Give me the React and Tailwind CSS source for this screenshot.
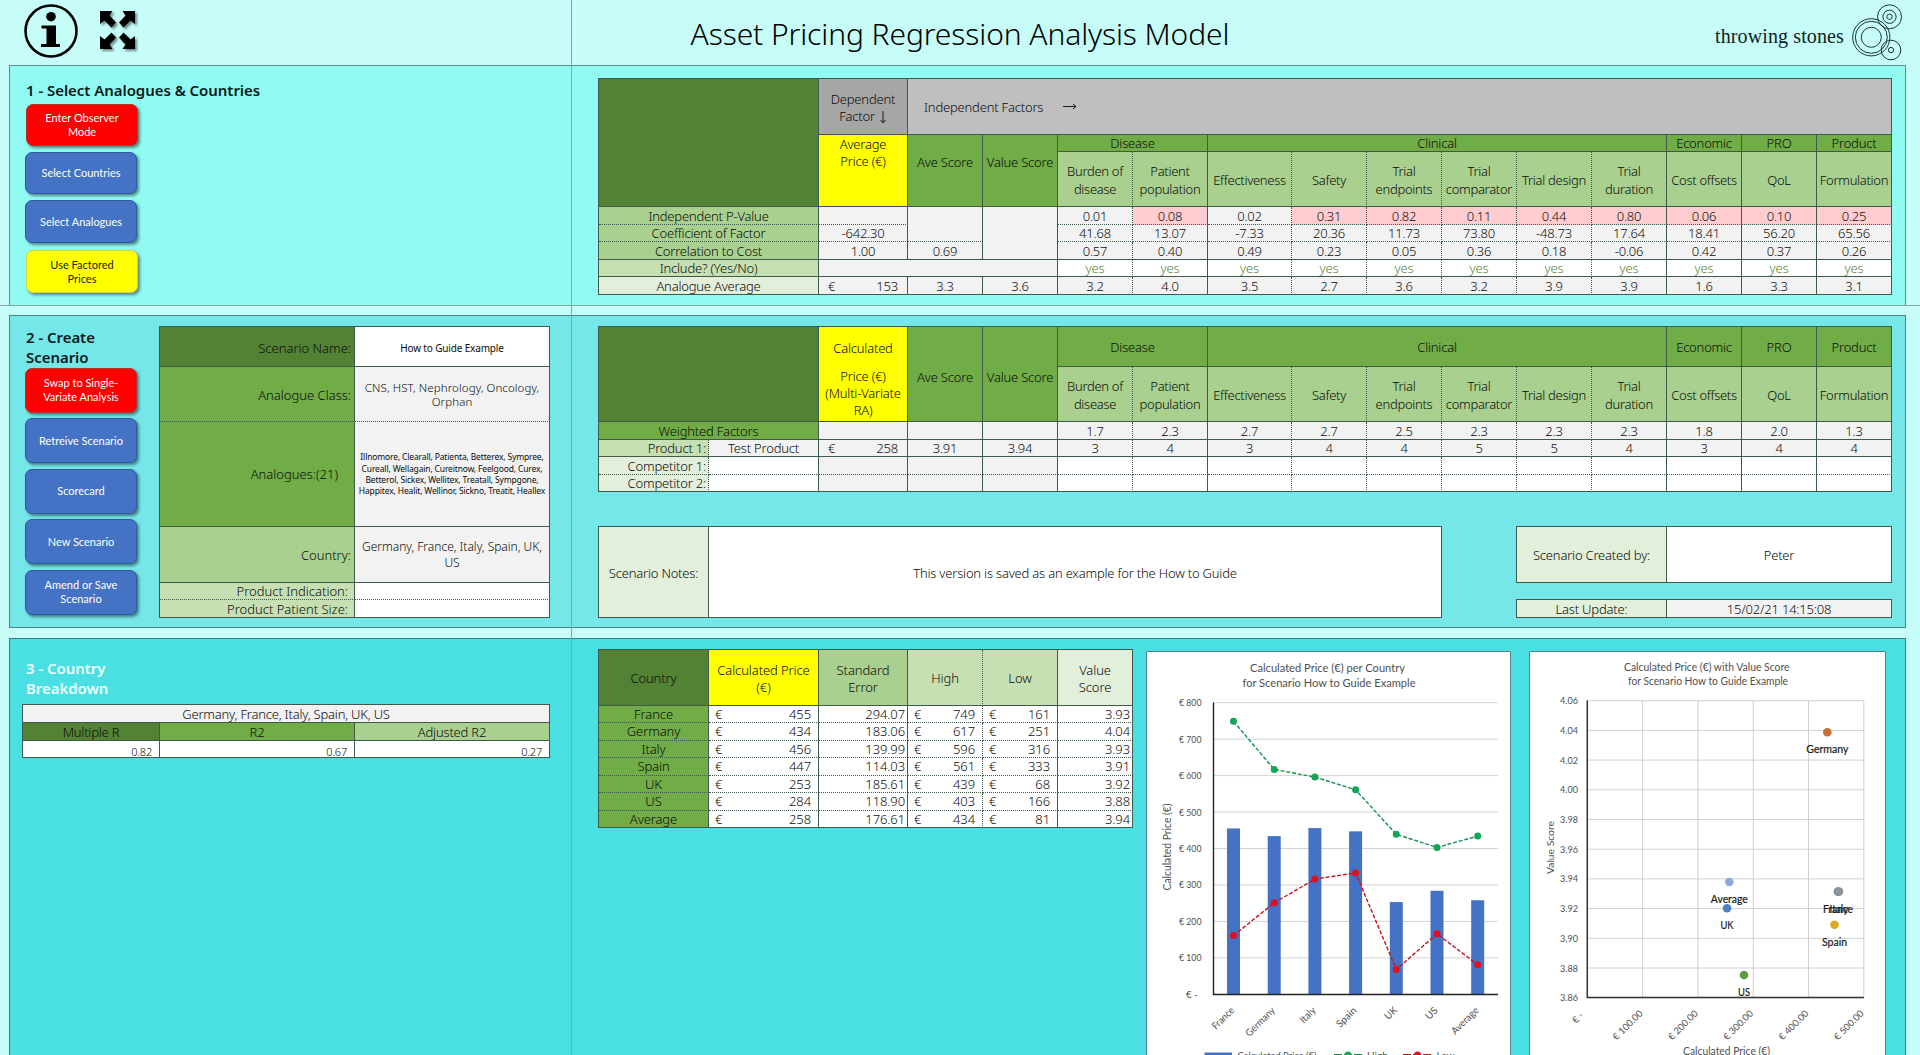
import React from "react";

const S = "border-r border-b border-[#3f5a4a] flex items-center justify-center text-center ";
const SD = "border-r border-b border-[#3f5a4a] [border-bottom-style:dotted] flex items-center justify-center text-center ";
const DS = "border-r border-b border-[#3f5a4a] [border-right-style:dotted] flex items-center justify-center text-center ";
const DD = "border-r border-b border-[#3f5a4a] border-dotted flex items-center justify-center text-center ";

const DARK = "bg-[#548235] ";
const GREEN = "bg-[#70ad47] ";
const LIGHT = "bg-[#a9d08e] ";
const PALE = "bg-[#c6e0b4] ";
const FAINT = "bg-[#e2efda] ";
const GREY = "bg-[#f2f2f2] ";

function factorBorder(i, dottedBottom) {
  const dottedRight = i === 0 || (i >= 2 && i <= 6);
  if (dottedRight) return dottedBottom ? DD : DS;
  return dottedBottom ? SD : S;
}

const FACTORS = ["Burden of disease", "Patient population", "Effectiveness", "Safety", "Trial endpoints", "Trial comparator", "Trial design", "Trial duration", "Cost offsets", "QoL", "Formulation"];
const P_VALUES = ["0.01", "0.08", "0.02", "0.31", "0.82", "0.11", "0.44", "0.80", "0.06", "0.10", "0.25"];
const COEFFS = ["41.68", "13.07", "-7.33", "20.36", "11.73", "73.80", "-48.73", "17.64", "18.41", "56.20", "65.56"];
const CORRS = ["0.57", "0.40", "0.49", "0.23", "0.05", "0.36", "0.18", "-0.06", "0.42", "0.37", "0.26"];
const AVERAGES = ["3.2", "4.0", "3.5", "2.7", "3.6", "3.2", "3.9", "3.9", "1.6", "3.3", "3.1"];
const WEIGHTS = ["1.7", "2.3", "2.7", "2.7", "2.5", "2.3", "2.3", "2.3", "1.8", "2.0", "1.3"];
const PRODUCT = ["3", "4", "3", "4", "4", "5", "5", "4", "3", "4", "4"];
const BLANKS = ["", "", "", "", "", "", "", "", "", "", ""];

function Values({ items, dotted, tone }) {
  return items.map((v, i) => (
    <div key={i} className={factorBorder(i, dotted) + (tone || GREY)}>{v}</div>
  ));
}

function FactorNames() {
  return FACTORS.map((f, i) => (
    <div key={f} className={factorBorder(i, false) + LIGHT + "leading-[17.3px] tracking-[-0.3px] px-px pt-[3px]"}>{f}</div>
  ));
}

function GroupNames() {
  return (
    <>
      <div className={S + GREEN + "col-span-2"}>Disease</div>
      <div className={S + GREEN + "col-span-6"}>Clinical</div>
      <div className={S + GREEN}>Economic</div>
      <div className={S + GREEN}>PRO</div>
      <div className={S + GREEN}>Product</div>
    </>
  );
}

function Money({ children, className }) {
  return (
    <span className={"flex w-full justify-between " + (className || "pl-[9px] pr-[9px]")}>
      <span>€</span>
      <span>{children}</span>
    </span>
  );
}

function Button({ color = "blue", className = "", children }) {
  const tone =
    color === "red" ? "bg-[#ff0000] border-[#b3322c] text-white " :
    color === "yellow" ? "bg-[#ffff00] border-[#d9d23a] text-[#222] " :
    "bg-[#4472c4] border-[#2f5a9e] text-white ";
  return (
    <button className={"flex w-28 items-center justify-center rounded-[7px] border text-center font-[Lato] text-[11px] font-normal leading-[14px] tracking-normal shadow-[2px_2px_3px_rgba(0,0,0,0.45)] " + tone + className}>
      {children}
    </button>
  );
}

function Header() {
  return (
    <header className="flex h-[65px] w-full shrink-0 justify-between">
      <div className="flex w-[571px] gap-[21px] pl-6 pt-1">
        <svg width="54" height="54" viewBox="0 0 54 54">
          <circle cx="27" cy="27" r="25.5" fill="none" stroke="#000" strokeWidth="2.6" />
          <circle cx="27" cy="12.7" r="4.8" />
          <path d="M17.5 21.5H32V40H36V43H17V40H22.5V24.500H17.500Z" />
        </svg>
        <svg width="40" height="42" viewBox="0 0 40 42" className="mt-[6px] drop-shadow-[2px_2px_1px_rgba(0,0,0,0.45)]">
          {[0, 1, 2, 3].map((k) => (
            <path
              key={k}
              transform={`translate(${k % 2 ? 36 : 1} ${k > 1 ? 39 : 1}) scale(${k % 2 ? -1 : 1} ${k > 1 ? -1 : 1})`}
              d="M0 0H12.500L9.500 4.500L16 11.500L11.500 16.500L4.500 9.500L0 13Z"
            />
          ))}
        </svg>
      </div>
      <h1 className="w-[770px] whitespace-nowrap pt-[14px] text-center text-[30px] font-light leading-[40px] tracking-[-0.1px] text-black">
        Asset Pricing Regression Analysis Model
      </h1>
      <div className="flex w-[571px] justify-end">
        <span className="mr-[8px] pt-[23px] font-['Liberation_Serif'] text-[20px] leading-[26px] tracking-[0.12px] text-[#122]">throwing stones</span>
        <svg width="68" height="65" viewBox="1852 0 68 65" fill="none" stroke="#1c3434" strokeWidth="1">
          <circle cx="1871.300" cy="37.300" r="18.600" />
          <circle cx="1871.300" cy="37.300" r="16" />
          <circle cx="1871.300" cy="37.300" r="10" />
          <circle cx="1889.500" cy="16.800" r="12" />
          <circle cx="1889.500" cy="16.800" r="6.600" />
          <circle cx="1889.500" cy="16.800" r="2.700" />
          <circle cx="1891" cy="50" r="9.800" />
          <circle cx="1891" cy="50" r="2.600" />
        </svg>
      </div>
    </header>
  );
}

const WIDE = "grid w-[1294px] border-l border-t border-[#3f5a4a] ";

function SelectSection() {
  return (
    <section className="ml-[9px] flex h-60 w-[1897px] shrink-0 items-start border-x border-t border-[#5b8f8f] bg-[#91fbf3]">
      <aside className="flex w-[588px] shrink-0 flex-col pl-[15px] pt-[14px]">
        <h2 className="ml-px text-[15px] font-semibold leading-5 tracking-[-0.05px] text-[#0b1c1c]">1 - Select Analogues &amp; Countries</h2>
        <Button color="red" className="ml-px mt-1 h-[42px]">Enter Observer<br />Mode</Button>
        <Button className="mt-[6px] h-[42px]">Select Countries</Button>
        <Button className="mt-[6px] h-[43px]">Select Analogues</Button>
        <Button color="yellow" className="ml-px mt-[7px] h-[43px]">Use Factored<br />Prices</Button>
      </aside>
      <div className={WIDE + "mt-3 grid-cols-[220px_89px_75px_75px_75px_75px_84px_75px_75px_75px_75px_75px_75px_75px_75px] grid-rows-[56px_17px_55px_18px_17px_18px_17px_18px]"}>
        <div className={S + DARK + "row-span-3"} />
        <div className={S + "bg-[#a6a6a6] leading-[17px] pt-[2px]"}>
          <span>Dependent<br />Factor
            <svg width="8" height="13" viewBox="0 0 8 13" className="ml-1 inline-block" fill="none" stroke="#1c1c1c"><path d="M4 0V12M1.500 9L4 12L6.500 9" /></svg>
          </span>
        </div>
        <div className="col-span-13 flex items-center gap-5 border-b border-r border-[#3f5a4a] bg-[#bfbfbf] pl-[16px]">
          <span>Independent Factors</span>
          <svg width="14" height="8" viewBox="0 0 14 8" fill="none" stroke="#1c1c1c"><path d="M0 3.500H13M10 1L13 3.500L10 6" /></svg>
        </div>
        <div className={S + "row-span-2 bg-[#ffff00] items-start! pt-px leading-[17px]"}>Average<br />Price (€)</div>
        <div className={S + GREEN + "row-span-2 pb-[17px]"}>Ave Score</div>
        <div className={S + GREEN + "row-span-2 pb-[17px] whitespace-nowrap"}>Value Score</div>
        <GroupNames />
        <FactorNames />

        <div className={SD + LIGHT}>Independent P-Value</div>
        <div className={SD + GREY} />
        <div className={SD + GREY + "row-span-2"} />
        <div className={S + GREY + "row-span-3"} />
        {P_VALUES.map((v, i) => (
          <div key={i} className={factorBorder(i, true) + (i === 0 || i === 2 ? GREY : "bg-[#ffcdd0]")}>{v}</div>
        ))}

        <div className={SD + LIGHT}>Coefficient of Factor</div>
        <div className={SD + GREY}>-642.30</div>
        <Values items={COEFFS} dotted />

        <div className={S + LIGHT}>Correlation to Cost</div>
        <div className={S + GREY}>1.00</div>
        <div className={S + GREY}>0.69</div>
        <Values items={CORRS} />

        <div className={S + PALE}>Include? (Yes/No)</div>
        <div className={S + GREY + "col-span-3"} />
        <Values items={BLANKS.map(() => "yes")} tone="bg-white text-[#548235]" />

        <div className={S + FAINT}>Analogue Average</div>
        <div className={S + GREY}><Money>153</Money></div>
        <div className={S + GREY}>3.3</div>
        <div className={S + GREY}>3.6</div>
        <Values items={AVERAGES} />
      </div>
    </section>
  );
}

function ScenarioTable() {
  return (
    <div className="mt-[10px] grid w-[391px] grid-cols-[195px_195px] grid-rows-[40px_55px_105px_56px_17px_18px] border-l border-t border-[#3f5a4a] tracking-normal">
      <div className={S + DARK + "justify-end! pr-[3px] pt-[3px]"}>Scenario Name:</div>
      <div className={S + "bg-white pt-[3px] text-[10px] font-normal tracking-[-0.15px]"}>How to Guide Example</div>
      <div className={SD + GREEN + "justify-end! pr-[3px] pt-[2px]"}>Analogue Class:</div>
      <div className={SD + GREY + "pt-[2px] text-[11.5px] leading-[14px] tracking-[0.1px]"}>CNS, HST, Nephrology, Oncology,<br />Orphan</div>
      <div className={S + GREEN + "justify-end! pr-4"}>Analogues:(21)</div>
      <div className={S + GREY + "whitespace-nowrap text-[8.500px] font-normal leading-[11.300px] tracking-[-0.15px]"}>
        Illnomore, Clearall, Patienta, Betterex, Sympree,<br />
        Cureall, Wellagain, Cureitnow, Feelgood, Curex,<br />
        Betterol, Sickex, Wellitex, Treatall, Sympgone,<br />
        Happitex, Healit, Wellinor, Sickno, Treatit, Heallex
      </div>
      <div className={S + LIGHT + "justify-end! pr-[3px]"}>Country:</div>
      <div className={S + GREY + "text-[12px] leading-[15.5px]"}>Germany, France, Italy, Spain, UK,<br />US</div>
      <div className={SD + PALE + "justify-end! pr-[6px]"}>Product Indication:</div>
      <div className={SD + "bg-white"} />
      <div className={S + PALE + "justify-end! pr-[6px]"}>Product Patient Size:</div>
      <div className={S + "bg-white"} />
    </div>
  );
}

function CreateSection() {
  return (
    <section className="ml-[9px] mt-[9px] flex h-[313px] w-[1897px] shrink-0 items-start border border-[#4a8488] bg-[#76e7e9]">
      <aside className="flex w-[588px] shrink-0">
        <div className="flex w-[149px] flex-col gap-[5.5px] pl-[15px] pt-[12px]">
          <h2 className="ml-px h-[34px] text-[15px] font-semibold leading-[19.500px] tracking-[-0.05px] text-[#0b1c1c]">2 - Create<br />Scenario</h2>
          <Button color="red" className="h-[45px]">Swap to Single-<br />Variate Analysis</Button>
          <Button className="h-[45px]">Retreive Scenario</Button>
          <Button className="h-[45px]">Scorecard</Button>
          <Button className="h-[45px]">New Scenario</Button>
          <Button className="h-[45px]">Amend or Save<br />Scenario</Button>
        </div>
        <ScenarioTable />
      </aside>
      <div className="flex flex-col">
        <div className={WIDE + "mt-[10px] grid-cols-[110px_110px_89px_75px_75px_75px_75px_84px_75px_75px_75px_75px_75px_75px_75px_75px] grid-rows-[40px_55px_18px_17px_18px_17px]"}>
          <div className={S + DARK + "col-span-2 row-span-2"} />
          <div className={S + "row-span-2 bg-[#ffff00] flex-col leading-[17px] justify-start! pt-[13px]"}>
            <span>Calculated</span>
            <span className="mt-[11px] whitespace-nowrap">Price (€)<br />(Multi-Variate<br />RA)</span>
          </div>
          <div className={S + GREEN + "row-span-2 pt-[5px]"}>Ave Score</div>
          <div className={S + GREEN + "row-span-2 whitespace-nowrap pt-[5px]"}>Value Score</div>
          <GroupNames />
          <FactorNames />

          <div className={S + GREEN + "col-span-2"}>Weighted Factors</div>
          <div className={S + GREY} />
          <div className={S + GREY} />
          <div className={S + GREY} />
          <Values items={WEIGHTS} />

          <div className={DS + PALE + "justify-end! pr-[2px]"}>Product 1:</div>
          <div className={S + GREY}>Test Product</div>
          <div className={S + GREY}><Money>258</Money></div>
          <div className={S + GREY}>3.91</div>
          <div className={S + GREY}>3.94</div>
          <Values items={PRODUCT} />

          <div className={DD + FAINT + "justify-end! pr-[2px]"}>Competitor 1:</div>
          <div className={SD + "bg-white"} />
          <div className={SD + GREY} />
          <div className={SD + GREY} />
          <div className={SD + GREY} />
          <Values items={BLANKS} dotted tone="bg-white" />

          <div className={DS + FAINT + "justify-end! pr-[2px]"}>Competitor 2:</div>
          <div className={S + "bg-white"} />
          <div className={S + GREY} />
          <div className={S + GREY} />
          <div className={S + GREY} />
          <Values items={BLANKS} tone="bg-white" />
        </div>

        <div className="mt-[34px] flex w-[1294px] items-start justify-between">
          <div className="grid grid-cols-[110px_733px] grid-rows-[91px] border-l border-t border-[#3f5a4a]">
            <div className={S + FAINT + "pt-[2px]"}>Scenario Notes:</div>
            <div className={S + "bg-white pt-[2px]"}>This version is saved as an example for the How to Guide</div>
          </div>
          <div className="flex flex-col gap-4">
            <div className="grid grid-cols-[150px_225px] grid-rows-[56px] border-l border-t border-[#3f5a4a]">
              <div className={S + FAINT}>Scenario Created by:</div>
              <div className={S + "bg-white"}>Peter</div>
            </div>
            <div className="grid grid-cols-[150px_225px] grid-rows-[18px] border-l border-t border-[#3f5a4a]">
              <div className={S + FAINT}>Last Update:</div>
              <div className={S + GREY}>15/02/21 14:15:08</div>
            </div>
          </div>
        </div>
      </div>
    </section>
  );
}

const COUNTRIES = [
  ["France", 455, "294.07", 749, 161, "3.93"],
  ["Germany", 434, "183.06", 617, 251, "4.04"],
  ["Italy", 456, "139.99", 596, 316, "3.93"],
  ["Spain", 447, "114.03", 561, 333, "3.91"],
  ["UK", 253, "185.61", 439, 68, "3.92"],
  ["US", 284, "118.90", 403, 166, "3.88"],
  ["Average", 258, "176.61", 434, 81, "3.94"],
];

function CountryTable() {
  return (
    <div className="mt-[10px] grid shrink-0 grid-cols-[110px_110px_89px_75px_75px_75px] grid-rows-[56px_17px_18px_17px_18px_17px_18px_17px] self-start border-l border-t border-[#3f5a4a] leading-[17px] tracking-[-0.1px]">
      <div className={S + DARK + "pt-[2px]"}>Country</div>
      <div className={S + "bg-[#ffff00] pt-[2px]"}>Calculated Price<br />(€)</div>
      <div className={S + LIGHT + "pt-[2px]"}>Standard<br />Error</div>
      <div className={DS + PALE + "pt-[2px]"}>High</div>
      <div className={S + PALE + "pt-[2px]"}>Low</div>
      <div className={S + FAINT + "pt-[2px]"}>Value<br />Score</div>
      {COUNTRIES.map(([name, price, err, high, low, score], i) => {
        const b = i === 6 ? S : SD;
        return (
          <React.Fragment key={name}>
            <div className={b + GREEN}>{name}</div>
            <div className={b + "bg-white"}><Money className="pl-[6px] pr-[7px]">{price}</Money></div>
            <div className={b + "justify-end! bg-white pr-[2px]"}>{err}</div>
            <div className={(i === 6 ? DS : DD) + "bg-white"}><Money className="pl-[6px] pr-[7px]">{high}</Money></div>
            <div className={b + "bg-white"}><Money className="pl-[6px] pr-[7px]">{low}</Money></div>
            <div className={b + "justify-end! bg-white pr-[2px]"}>{score}</div>
          </React.Fragment>
        );
      })}
    </div>
  );
}

function PriceChart() {
  const x = (i) => 1233.5 + i * 40.7;
  const y = (v) => 994.3 - v * 0.3645;
  const line = (k) => COUNTRIES.map((c, i) => `${x(i)},${y(c[k])}`).join(" ");
  const nameLen = [27, 37, 18, 24, 13, 13, 34];
  return (
    <svg width="365" height="404" viewBox="1146 651 365 404" className="ml-[13px] mt-3 shrink-0 bg-white font-[Lato] font-normal tracking-normal" fill="#505050">
      <text x="1250" y="671.500" fontSize="11" textLength="155" lengthAdjust="spacingAndGlyphs">Calculated Price (€) per Country</text>
      <text x="1242.500" y="686.500" fontSize="11" textLength="173" lengthAdjust="spacingAndGlyphs">for Scenario How to Guide Example</text>
      {[1, 2, 3, 4, 5, 6, 7, 8].map((n) => (
        <g key={n}>
          <path d={`M1213 ${y(n * 100)}H1498`} stroke="#d4d4d4" />
          <text x="1179" y={y(n * 100) + 3.5} fontSize="9.500" textLength="22.500" lengthAdjust="spacingAndGlyphs">{`€ ${n}00`}</text>
        </g>
      ))}
      <text x="1186" y="997.500" fontSize="9.500">€ -</text>
      {COUNTRIES.map((c, i) => (
        <rect key={c[0]} x={x(i) - 6.5} y={y(c[1])} width="13" height={994.3 - y(c[1])} fill="#4472c4" />
      ))}
      <path d="M1213.500 702.500V994.500H1498" fill="none" stroke="#222" strokeWidth="1.400" />
      <polyline points={line(3)} fill="none" stroke="#12944c" strokeWidth="1.400" strokeDasharray="4 1.800" />
      <polyline points={line(4)} fill="none" stroke="#c8141c" strokeWidth="1.400" strokeDasharray="4 1.800" />
      {COUNTRIES.map((c, i) => (
        <g key={c[0]}>
          <circle cx={x(i)} cy={y(c[3])} r="3.500" fill="#14a656" />
          <circle cx={x(i)} cy={y(c[4])} r="3.500" fill="#e01020" />
          <text transform={`translate(${x(i) + 1.5} 1011) rotate(-45)`} x={-nameLen[i]} y="0" fontSize="10" textLength={nameLen[i]} lengthAdjust="spacingAndGlyphs">{c[0]}</text>
        </g>
      ))}
      <text transform="translate(1170.500 890.500) rotate(-90)" fontSize="10.500" textLength="87" lengthAdjust="spacingAndGlyphs">Calculated Price (€)</text>
      <rect x="1204.500" y="1052.500" width="27.500" height="5" fill="#4472c4" />
      <text x="1237.500" y="1058.500" fontSize="10" textLength="79" lengthAdjust="spacingAndGlyphs">Calculated Price (€)</text>
      <path d="M1334 1054.800H1362" stroke="#12944c" strokeWidth="1.400" strokeDasharray="8 2" />
      <circle cx="1348" cy="1055" r="3.500" fill="#14a656" />
      <text x="1367" y="1058.500" fontSize="10">High</text>
      <path d="M1403 1054.800H1431" stroke="#c8141c" strokeWidth="1.400" strokeDasharray="8 2" />
      <circle cx="1417.500" cy="1055" r="3.500" fill="#e01020" />
      <text x="1436.500" y="1058.500" fontSize="10">Low</text>
      <path d="M1146.500 1056V651.500H1510.500V1056" fill="none" stroke="#4a8488" />
    </svg>
  );
}

const POINTS = [
  ["Germany", 1827.3, 732.3, "#c6703a", 42],
  ["Average", 1729.3, 882, "#8ea6d8", 37],
  ["UK", 1727, 908.3, "#4d80bd", 13],
  ["Spain", 1834.5, 924.7, "#dba91e", 25],
  ["US", 1744, 975, "#5f9a3e", 12],
  ["France", 1838, 891.6, "#6f7f95", 30],
  ["Italy", 1839, 891.6, "#909496", 19],
];

function ScoreChart() {
  return (
    <svg width="357" height="404" viewBox="1529 651 357 404" className="ml-[18px] mt-3 shrink-0 bg-white font-[Lato] font-normal tracking-normal" fill="#505050">
      <text x="1624" y="671" fontSize="10.500" textLength="165.500" lengthAdjust="spacingAndGlyphs">Calculated Price (€) with Value Score</text>
      <text x="1628" y="684.500" fontSize="10.500" textLength="160" lengthAdjust="spacingAndGlyphs">for Scenario How to Guide Example</text>
      {["4.06", "4.04", "4.02", "4.00", "3.98", "3.96", "3.94", "3.92", "3.90", "3.88", "3.86"].map((t, i) => (
        <g key={t}>
          <path d={`M1587 ${700.7 + i * 29.7}H1864`} stroke="#d0d0d0" />
          <text x="1560" y={704.2 + i * 29.7} fontSize="9.500" textLength="18" lengthAdjust="spacingAndGlyphs">{t}</text>
        </g>
      ))}
      {["€ -", "€ 100.00", "€ 200.00", "€ 300.00", "€ 400.00", "€ 500.00"].map((t, i) => (
        <g key={t}>
          <path d={`M${1587.3 + i * 55.3} 700.700V997.700`} stroke="#d0d0d0" />
          <text transform={`translate(${(i ? 1588 : 1584) + i * 55.3} ${i ? 1014 : 1016}) rotate(-45)`} textAnchor="end" fontSize="9.500">{t}</text>
        </g>
      ))}
      <path d="M1587.300 700.500V997.500H1864" fill="none" stroke="#333" strokeWidth="1.500" />
      {POINTS.map(([t, cx, cy, fill, len]) => (
        <g key={t}>
          <circle cx={cx} cy={cy} r="4.300" fill={fill} />
          <text x={cx - len / 2} y={cy + 21} fontSize="10.500" fill="#1a1a1a" stroke="#1a1a1a" strokeWidth="0.200" textLength={len} lengthAdjust="spacingAndGlyphs">{t}</text>
        </g>
      ))}
      <text transform="translate(1554 874) rotate(-90)" fontSize="10" textLength="53" lengthAdjust="spacingAndGlyphs">Value Score</text>
      <text x="1683" y="1055" fontSize="10.500" textLength="87" lengthAdjust="spacingAndGlyphs">Calculated Price (€)</text>
      <path d="M1529.500 1056V651.500H1885.500V1056" fill="none" stroke="#4a8488" />
    </svg>
  );
}

function BreakdownSection() {
  return (
    <section className="ml-[9px] mt-[10px] flex h-[417px] w-[1897px] shrink-0 items-start border-x border-t border-[#3a7c80] bg-[#4adfe2]">
      <aside className="flex w-[588px] shrink-0 flex-col pl-3 pt-[20px]">
        <h2 className="ml-1 h-[45px] text-[15px] font-semibold leading-[19.500px] tracking-[-0.05px] text-[#eafffe]">3 - Country<br />Breakdown</h2>
        <div className="grid w-[528px] grid-cols-[137px_195px_195px] grid-rows-[18px_18px_17px] border-l border-t border-[#3f5a4a]">
          <div className={S + GREY + "col-span-3"}>Germany, France, Italy, Spain, UK, US</div>
          <div className={S + DARK}>Multiple R</div>
          <div className={S + GREEN}>R2</div>
          <div className={S + LIGHT}>Adjusted R2</div>
          {["0.82", "0.67", "0.27"].map((v) => (
            <div key={v} className={S + "justify-end! bg-white pr-[7px] pt-[6px] text-[11px]"}>{v}</div>
          ))}
        </div>
      </aside>
      <CountryTable />
      <PriceChart />
      <ScoreChart />
    </section>
  );
}

export default function App() {
  return (
    <main className="relative flex h-[1055px] w-[1920px] flex-col overflow-hidden bg-[#c6fdf8] font-['Noto_Sans',sans-serif] text-[13px] font-light leading-4 tracking-[-0.2px] text-[#0c0c0c]">
      <Header />
      <SelectSection />
      <div className="h-px w-full shrink-0 bg-[#7fa8a8]" />
      <CreateSection />
      <BreakdownSection />
      <div className="pointer-events-none absolute inset-y-0 left-[571px] w-px bg-[#86a5a8]" />
    </main>
  );
}
